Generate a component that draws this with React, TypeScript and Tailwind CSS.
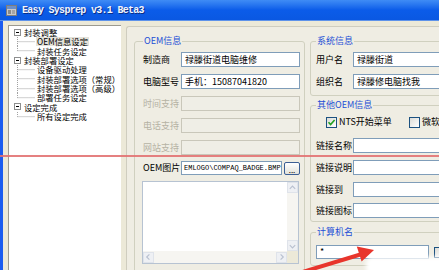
import React from 'react';

// Tree items for the left navigation
const treeGroups = [
  { title: '封装调整', items: ['OEM信息设定', '封装任务设定'], selected: 0 },
  { title: '封装部署设定', items: ['设备驱动处理', '封装部署选项（常规）', '封装部署选项（高级）', '部署任务设定'], selected: -1 },
  { title: '设定完成', items: ['所有设定完成'], selected: -1 },
];

const Connector = ({ last }: { last: boolean }) => (
  <svg width="19" height="9.35" className="shrink-0" viewBox="0 0 19 9.35">
    <line x1="0.5" y1="0" x2="0.5" y2={last ? 4.7 : 9.35} stroke="#a0a0a0" strokeDasharray="1 1" />
    <line x1="0.5" y1="4.7" x2="18" y2="4.7" stroke="#a0a0a0" strokeDasharray="1 1" />
  </svg>
);

const Tree = () => (
  <div className="w-[113px] shrink-0 bg-white border-l border-t border-[#9c9a90] pt-[1.5px] text-black text-[8.3px] whitespace-nowrap overflow-hidden">
    {treeGroups.map(group => (
      <div key={group.title}>
        <div className="flex items-center h-[9.35px]">
          <div className="ml-[5px] w-[7px] h-[7px] border border-[#8e8f8f] bg-white flex items-center justify-center shrink-0">
            <div className="w-[3px] h-px bg-black" />
          </div>
          <span className="ml-[3px] leading-none">{group.title}</span>
        </div>
        {group.items.map((item, i) => (
          <div key={item} className="flex items-center h-[9.35px]">
            <div className="ml-[8px]" />
            <Connector last={i === group.items.length - 1} />
            <span className={'leading-none px-px ' + (i === group.selected ? 'bg-[#e4e2da]' : '')}>{item}</span>
          </div>
        ))}
      </div>
    ))}
  </div>
);

const Input = ({ value, disabled, w }: { value?: string; disabled?: boolean; w: string }) => (
  <div
    className={
      'h-[15px] flex items-center pl-[3px] border shrink-0 overflow-hidden whitespace-nowrap ' + w + ' ' +
      (disabled ? 'bg-[#efeee6] border-[#c9c7ba]' : 'bg-white border-[#7f9db9]')
    }
  >
    {value}
  </div>
);

const Row = ({ label, value, disabled, labelW, inputW, className }: {
  label: string; value?: string; disabled?: boolean; labelW: string; inputW: string; className?: string;
}) => (
  <div className={'flex items-center ' + (className || '')}>
    <span className={labelW + ' shrink-0 ' + (disabled ? 'text-[#b5b2a4]' : 'text-black')}>{label}</span>
    <Input value={value} disabled={disabled} w={inputW} />
  </div>
);

const Legend = ({ children }: { children: React.ReactNode }) => (
  <legend className="px-px h-[10px] leading-[10px] text-[#1d4fd6]">{children}</legend>
);

const Checkbox = ({ checked }: { checked?: boolean }) => (
  <div className="w-[11px] h-[11px] border border-[#1c5180] bg-gradient-to-br from-[#dcdcd7] to-white flex items-center justify-center shrink-0">
    {checked && (
      <svg width="9" height="9" viewBox="0 0 9 9">
        <path d="M1.5 4.2 L3.6 6.5 L7.6 2" fill="none" stroke="#21a121" strokeWidth="1.6" />
      </svg>
    )}
  </div>
);

const ScrollArrow = ({ dir }: { dir: 'up' | 'down' | 'left' | 'right' }) => {
  const d = {
    up: 'M2 6 L5 3 L8 6',
    down: 'M2 4 L5 7 L8 4',
    left: 'M6 2 L3 5 L6 8',
    right: 'M4 2 L7 5 L4 8',
  }[dir];
  return (
    <div className="w-[11px] h-[11px] bg-[#eef0f4] border border-[#dfe3ea] flex items-center justify-center shrink-0">
      <svg width="10" height="10" viewBox="0 0 10 10">
        <path d={d} fill="none" stroke="#b9c1d0" strokeWidth="1.3" />
      </svg>
    </div>
  );
};

const ImageBox = () => (
  <div className="mt-[6px] ml-[-1px] w-[157px] h-[83px] border border-[#b7c3d2] bg-white flex flex-col">
    <div className="flex flex-1">
      <div className="flex-1" />
      <div className="w-[11px] bg-[#f6f5f1] flex flex-col justify-between">
        <ScrollArrow dir="up" />
        <ScrollArrow dir="down" />
      </div>
    </div>
    <div className="flex h-[12px]">
      <div className="flex-1 bg-[#f6f5f1] flex justify-between items-center">
        <ScrollArrow dir="left" />
        <ScrollArrow dir="right" />
      </div>
      <div className="w-[11px] bg-[#ece9d8]" />
    </div>
  </div>
);

const App: React.FC = () => {
  return (
    <div className="relative w-[439px] h-[270px] overflow-hidden bg-[#ece9d8] text-[9px] font-[family-name:'Noto_Sans_CJK_SC','Noto_Sans',sans-serif]">
      {/* title bar */}
      <div className="h-[21px] flex items-center bg-gradient-to-b from-[#3f8cf5] via-[#0b5ce9] to-[#0a58e2] border-b border-[#5e93ea]">
        <svg width="11" height="11" viewBox="0 0 11 11" className="ml-[6px]">
          <rect x="0.5" y="0.5" width="10" height="10" fill="#c9c9c9" stroke="#7d7d7d" />
          <rect x="1" y="1" width="9" height="3" fill="#6c8fc8" />
          <rect x="2" y="5" width="3" height="4" fill="#8a8a8a" />
          <rect x="6" y="5" width="3" height="4" fill="#a5a5a5" />
        </svg>
        <span className="ml-[5px] text-[10px] font-bold tracking-[-0.7px] text-[#f2f4fa] font-[family-name:'Liberation_Mono',monospace] [text-shadow:1px_1px_0_#0a2f8a]">
          Easy Sysprep v3.1 Beta3
        </span>
      </div>

      {/* body */}
      <div className="flex h-[249px]">
        <div className="w-[3px] bg-[#1b5cf0] shrink-0" />
        <div className="ml-[5px] mt-[4px] flex">
          <Tree />
        </div>

        <div className="ml-[5px] mt-[5px] flex-1 border-l border-t border-[#cfcdbf] rounded-tl-[3px] bg-[#efede3] pt-[9px] pl-[7px] flex gap-[5px] min-w-0">
          {/* left column: OEM info */}
          <fieldset className="w-[171px] h-[260px] shrink-0 border border-[#d0d0bf] rounded-[3px] pl-[8px]">
            <Legend>OEM信息</Legend>
            <div className="mt-[6px] flex flex-col gap-[7px]">
              <Row label="制造商" value="禄滕街道电脑维修" labelW="w-[38px]" inputW="w-[119px]" />
              <Row label="电脑型号" value="手机：15087041820" labelW="w-[38px]" inputW="w-[119px]" />
              <Row label="时间支持" disabled labelW="w-[38px]" inputW="w-[119px]" />
              <Row label="电话支持" disabled labelW="w-[38px]" inputW="w-[119px]" />
              <Row label="网站支持" disabled labelW="w-[38px]" inputW="w-[119px]" />
            </div>
            <div className="mt-[6px] flex items-center">
              <span className="w-[38px] shrink-0">OEM图片</span>
              <div className="h-[14px] w-[101px] bg-white border border-[#7f9db9] flex items-center pl-[2px] overflow-hidden whitespace-nowrap text-[7px] font-[family-name:'Liberation_Mono',monospace]">
                EMLOGO\COMPAQ_BADGE.BMP
              </div>
              <div className="ml-[2px] w-[16px] h-[13px] rounded-[2px] border border-[#3c5f94] bg-gradient-to-b from-white to-[#e3e2da] flex items-end justify-center leading-[9px] text-[8px]">
                ...
              </div>
            </div>
            <ImageBox />
          </fieldset>

          {/* right column */}
          <div className="w-[150px] shrink-0 flex flex-col">
            <fieldset className="border border-[#d0d0bf] rounded-[3px] pl-[5px] pb-[6px]">
              <Legend>系统信息</Legend>
              <div className="mt-[6px] flex flex-col gap-[7px]">
                <Row label="用户名" value="禄滕街道" labelW="w-[37px]" inputW="w-[110px]" />
                <Row label="组织名" value="禄滕修电脑找我" labelW="w-[37px]" inputW="w-[110px]" />
              </div>
            </fieldset>

            <fieldset className="mt-[4px] border border-[#d0d0bf] rounded-[3px] pl-[5px] pb-[3px]">
              <Legend>其他OEM信息</Legend>
              <div className="mt-[6px] h-[12px] flex items-center whitespace-nowrap">
                <div className="ml-[10px]"><Checkbox checked /></div>
                <span className="ml-[2px] w-[70px] shrink-0">NTS开始菜单</span>
                <Checkbox />
                <span className="ml-[2px]">微软IE</span>
              </div>
              <div className="mt-[10px] flex flex-col gap-[7px]">
                <Row label="链接名称" labelW="w-[37px]" inputW="w-[110px]" />
                <Row label="链接说明" labelW="w-[37px]" inputW="w-[110px]" />
                <Row label="链接到" labelW="w-[37px]" inputW="w-[110px]" />
                <Row label="链接图标" labelW="w-[37px]" inputW="w-[110px]" className="mt-[-1px]" />
              </div>
            </fieldset>

            <fieldset className="mt-[5px] border border-[#d0d0bf] rounded-[3px] pl-[5px] pb-[6px]">
              <Legend>计算机名</Legend>
              <div className="mt-[8px] flex items-center">
                <div className="h-[14px] w-[113px] bg-white border border-[#7f9db9] pl-[3px] leading-[12px]">*</div>
                <div className="ml-[5px]"><Checkbox /></div>
              </div>
            </fieldset>
          </div>
        </div>
      </div>

      {/* red annotation line and arrow drawn over the screenshot */}
      <div className="absolute left-0 top-[155px] w-full h-[2px] bg-[#e27272]/90" />
      <div className="absolute left-[366px] top-[257px] w-[80px] h-[18px] bg-white rounded-[6px] blur-[2px]" />
      <svg className="absolute left-0 top-0" width="439" height="270" viewBox="0 0 439 270">
        <line x1="296" y1="274" x2="362" y2="254" stroke="#e8352c" strokeWidth="4" />
        <polygon points="374,250 361.6,261.5 356.8,246.5" fill="#e8352c" />
      </svg>
    </div>
  );
};

export default App;
